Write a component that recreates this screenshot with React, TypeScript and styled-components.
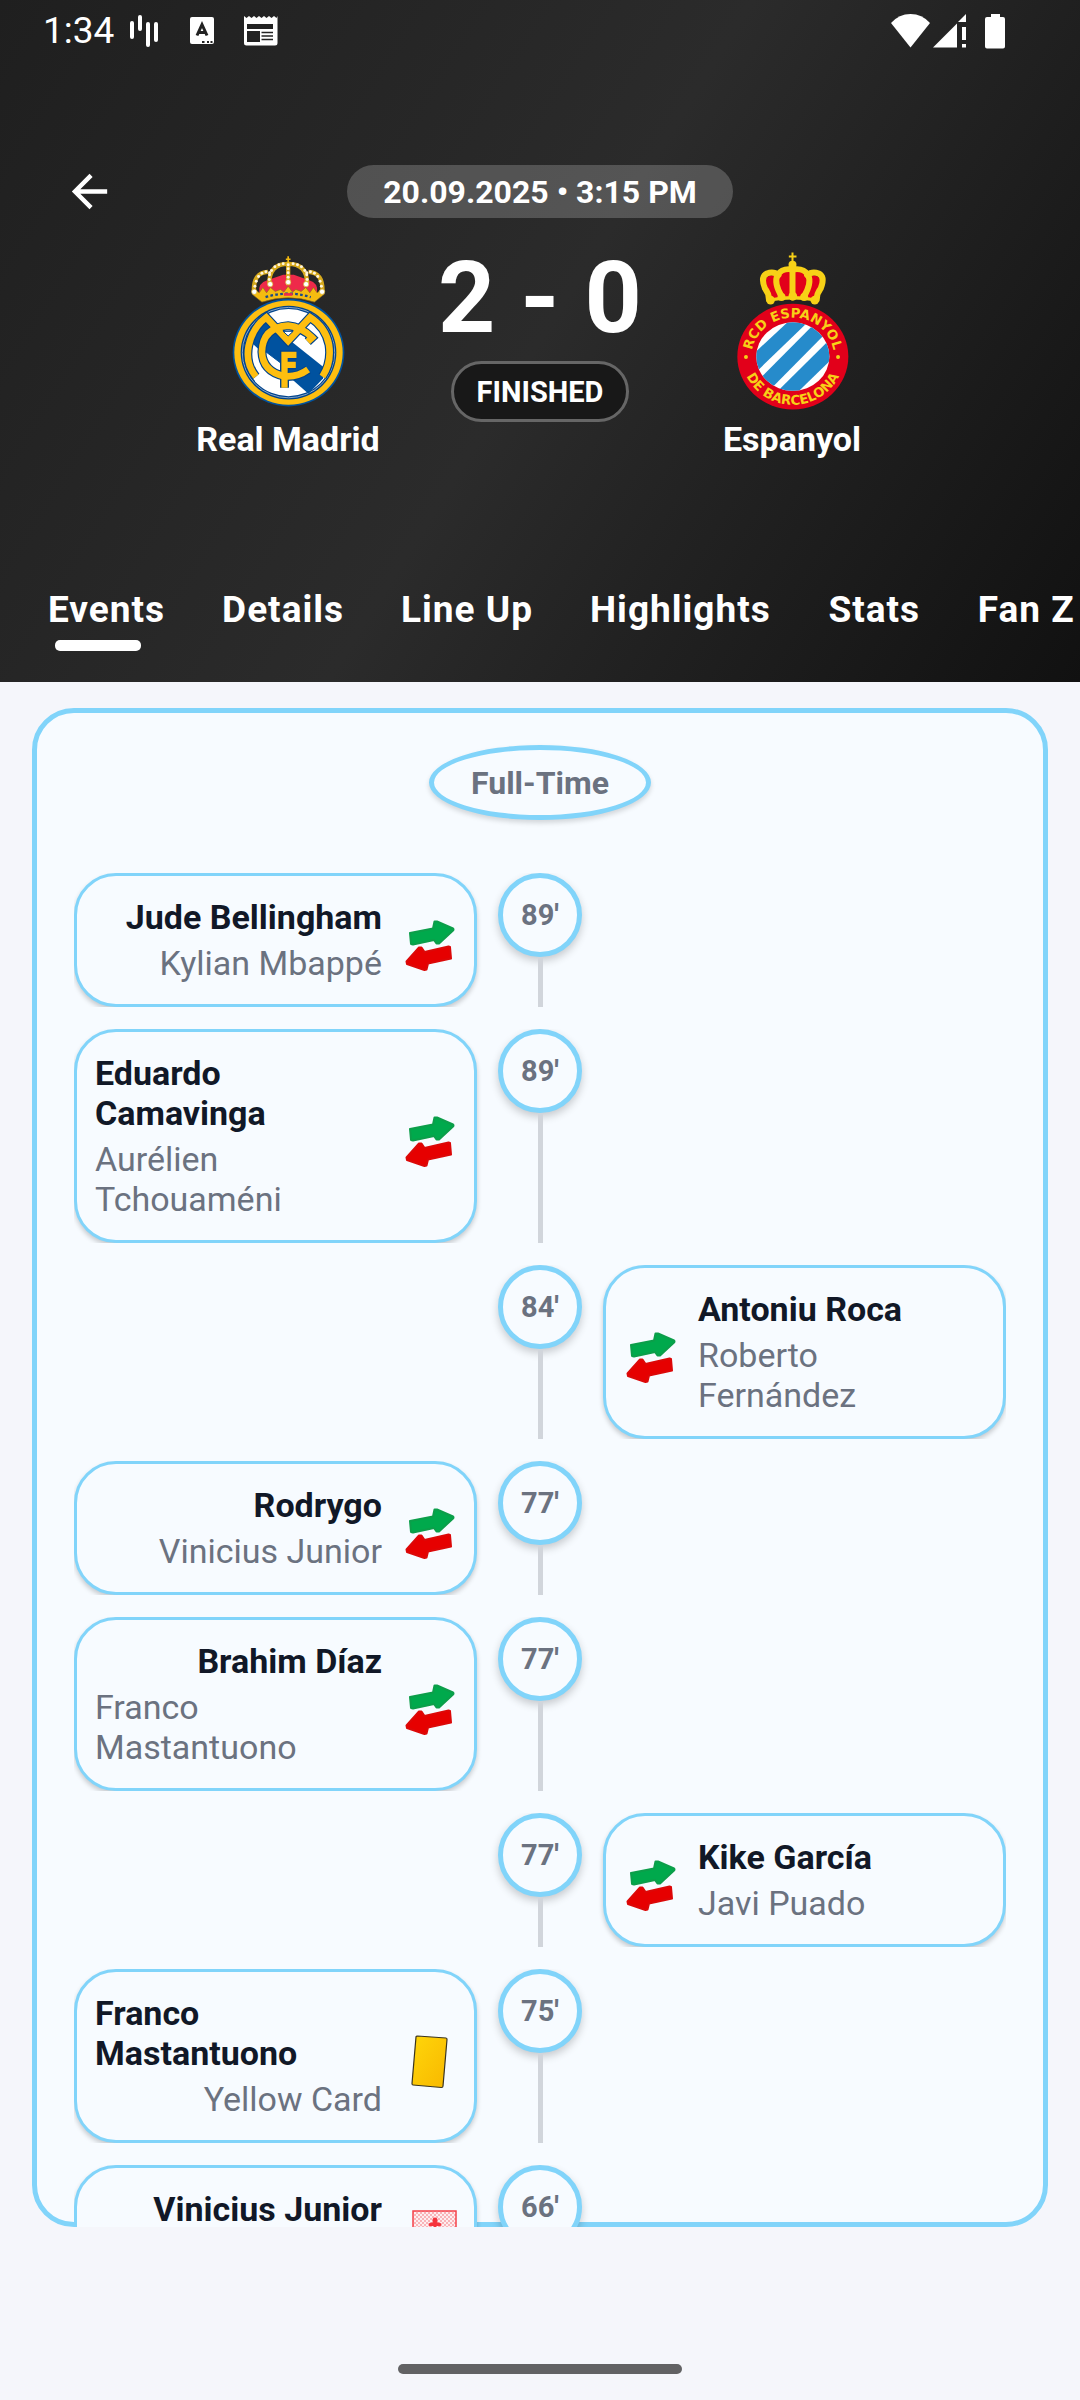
import { useState } from "react";
import styled, { createGlobalStyle } from "styled-components";

type Side = "home" | "away";
type EventKind = "sub" | "yellow" | "goal";

type MatchEvent = {
    minute: number;
    side: Side;
    kind: EventKind;
    player: string;
    detail?: string;
};

const TABS = ["Events", "Details", "Line Up", "Highlights", "Stats", "Fan Z"];

const EVENTS: MatchEvent[] = [
    { minute: 89, side: "home", kind: "sub", player: "Jude Bellingham", detail: "Kylian Mbappé" },
    { minute: 89, side: "home", kind: "sub", player: "Eduardo Camavinga", detail: "Aurélien Tchouaméni" },
    { minute: 84, side: "away", kind: "sub", player: "Antoniu Roca", detail: "Roberto Fernández" },
    { minute: 77, side: "home", kind: "sub", player: "Rodrygo", detail: "Vinicius Junior" },
    { minute: 77, side: "home", kind: "sub", player: "Brahim Díaz", detail: "Franco Mastantuono" },
    { minute: 77, side: "away", kind: "sub", player: "Kike García", detail: "Javi Puado" },
    { minute: 75, side: "home", kind: "yellow", player: "Franco Mastantuono", detail: "Yellow Card" },
    { minute: 66, side: "home", kind: "goal", player: "Vinicius Junior" },
];

const GlobalStyle = createGlobalStyle`
    * {
        box-sizing: border-box;
    }

    body {
        margin: 0;
        font-family: Roboto, "Noto Sans", sans-serif;
        background: #f5f6fb;
    }

    svg {
        display: block;
    }
`;

const Screen = styled.div`
    display: flex;
    flex-direction: column;
    height: 100vh;
    overflow: hidden;
`;

const Header = styled.header`
    color: white;
    background: linear-gradient(122deg, #1f1f1f 0%, #2b2b2b 50%, #111111 100%);
    padding-bottom: 31px;
`;

const StatusBar = styled.div`
    display: flex;
    justify-content: space-between;
    align-items: center;
    height: 62px;
    padding: 0 74px 0 43px;
`;

const StatusGroup = styled.div`
    display: flex;
    align-items: center;
`;

const Clock = styled.span`
    font-size: 37px;
    line-height: 44px;
    margin-right: 14px;
`;

const Nav = styled.div`
    display: grid;
    grid-template-columns: 1fr auto 1fr;
    align-items: center;
    padding: 0 63px;
    margin-top: 103px;
`;

const BackButton = styled.button`
    width: 53px;
    height: 53px;
    padding: 0;
    border: none;
    background: none;
    color: inherit;
    cursor: pointer;
`;

const DatePill = styled.div`
    grid-column: 2;
    padding: 9px 36px 7px;
    border-radius: 27px;
    background: rgba(255, 255, 255, 0.2);
    font-size: 32px;
    font-weight: 700;
    line-height: 37px;
`;

const Scoreboard = styled.div`
    display: grid;
    grid-template-columns: 1fr 200px 1fr;
    padding: 0 136px;
    margin-top: 34px;
`;

const Team = styled.div`
    display: flex;
    flex-direction: column;
    align-items: center;
    gap: 9px;
`;

const TeamName = styled.span`
    font-size: 34px;
    font-weight: 700;
    line-height: 40px;
`;

const Result = styled.div`
    display: flex;
    flex-direction: column;
    align-items: center;
    gap: 17px;
`;

const Score = styled.div`
    font-size: 100px;
    font-weight: 700;
    line-height: 92px;
    white-space: nowrap;
`;

const StatusPill = styled.div`
    padding: 11px 23px 9px;
    border: 3px solid #666666;
    border-radius: 31px;
    background: #181818;
    font-size: 29px;
    font-weight: 700;
    line-height: 35px;
`;

const Tabs = styled.nav`
    display: flex;
    gap: 57px;
    margin-top: 129px;
    padding-left: 48px;
    overflow: hidden;
`;

const Tab = styled.button`
    flex: none;
    display: flex;
    flex-direction: column;
    gap: 8px;
    padding: 0;
    border: none;
    background: none;
    color: inherit;
    font-family: inherit;
    font-size: 37px;
    font-weight: 700;
    line-height: 44px;
    letter-spacing: 1px;
    cursor: pointer;
`;

const Indicator = styled.span<{ $active: boolean }>`
    width: 86px;
    height: 11px;
    margin-left: 7px;
    border-radius: 5px;
    background: ${({ $active }) => ($active ? "white" : "transparent")};
`;

const Body = styled.main`
    flex: 1;
    min-height: 0;
    overflow: hidden;
    padding: 26px 32px 0;
`;

const Timeline = styled.section`
    height: 100%;
    padding: 32px 37px 0;
    border: 5px solid #81d4fa;
    border-radius: 42px;
    background: #f7fbff;
`;

const FullTime = styled.div`
    width: 222px;
    margin: 0 auto 53px;
    padding: 15px 0 13px;
    border: 5px solid #81d4fa;
    border-radius: 50%;
    background: #f7fbff;
    box-shadow: 0 3px 5px rgba(0, 0, 0, 0.15);
    color: #6b7280;
    font-size: 32px;
    font-weight: 700;
    line-height: 37px;
    text-align: center;
`;

const Row = styled.div`
    display: grid;
    grid-template-columns: 1fr 84px 1fr;
    column-gap: 21px;
    margin-bottom: 22px;
    overflow: hidden;
`;

const EventCard = styled.article<{ $side: Side }>`
    grid-column: ${({ $side }) => ($side === "home" ? 1 : 3)};
    grid-row: 1;
    display: flex;
    flex-direction: ${({ $side }) => ($side === "home" ? "row" : "row-reverse")};
    gap: 21px;
    min-height: 134px;
    padding: 21px 18px;
    border: 3px solid #81d4fa;
    border-radius: 42px;
    background: #f7fbff;
    box-shadow: 0 3px 5px rgba(0, 0, 0, 0.2);
`;

const EventText = styled.div<{ $side: Side }>`
    flex: 1;
    min-width: 0;
    display: flex;
    flex-direction: column;
    align-items: ${({ $side }) => ($side === "home" ? "flex-end" : "flex-start")};
    gap: 6px;
    padding-right: ${({ $side }) => ($side === "home" ? "0" : "8px")};
    font-size: 34px;
    line-height: 40px;
`;

const Player = styled.span`
    color: #111827;
    font-weight: 700;
`;

const Detail = styled.span`
    color: #6b7280;
`;

const IconBox = styled.div`
    flex: none;
    align-self: center;
    width: 53px;
    padding-top: 10px;

    svg {
        overflow: visible;
    }
`;

const MinuteColumn = styled.div`
    grid-column: 2;
    grid-row: 1;
    display: flex;
    flex-direction: column;
    align-items: center;
`;

const Minute = styled.div`
    display: flex;
    align-items: center;
    justify-content: center;
    width: 84px;
    height: 84px;
    border: 5px solid #81d4fa;
    border-radius: 50%;
    background: #f7fbff;
    box-shadow: 0 4px 8px rgba(0, 0, 0, 0.2);
    color: #6b7280;
    font-size: 29px;
    font-weight: 700;
`;

const Line = styled.div`
    flex: 1;
    width: 5px;
    background: #d1d5db;
`;

const BottomBar = styled.footer`
    display: flex;
    justify-content: center;
    align-items: flex-end;
    height: 173px;
    padding-bottom: 26px;
`;

const HomeIndicator = styled.div`
    width: 284px;
    height: 10px;
    border-radius: 5px;
    background: #626264;
`;

function StatusIcons() {
    return (
        <svg width="150" height="36" viewBox="0 0 150 36" fill="white">
            <rect x="2" y="8" width="4" height="18" rx="2" />
            <rect x="10" y="2" width="4" height="16" rx="2" />
            <rect x="18" y="9" width="4" height="25" rx="2" />
            <rect x="26" y="9" width="4" height="20" rx="2" />
            <rect x="62" y="4" width="24" height="27" rx="2" />
            <path d="M69 22.500L74 11.500L79 22.500M71 19.500H77" fill="none" stroke="#222" strokeWidth="3" />
            <path d="M74 28h2.500v2h-2.500zM79 28h2v2h-2zM82.500 28h2v2h-2z" fill="#222" />
            <path d="M116 3l2.500 2 2.500-2 2.500 2 2.500-2 2.500 2 2.500-2 2.500 2 2.500-2 2.500 2 2.500-2 2.500 2 2.500-2 2.500 2 1-2V30q0 2.500-2.500 2.500H118.500q-2.500 0-2.500-2.500z" />
            <path d="M119 11h26v5h-26zM119 18h13v11h-13z" fill="#222" />
            <path d="M133.500 19.500H145M133.500 23H145M133.500 26.500H145" stroke="#222" strokeWidth="1.500" />
        </svg>
    );
}

function SignalIcons() {
    return (
        <svg width="116" height="36" viewBox="0 0 116 36" fill="white">
            <path d="M1 10Q9 1 20.500 1T40 10L20.500 34.500z" />
            <path d="M43 34.500L67 10.500V34.500zM68 9L76 1V9z" />
            <rect x="72" y="14" width="4" height="13" />
            <rect x="72" y="31" width="4" height="3.500" />
            <path d="M101 1h9v3h3q2 0 2 2V33.500q0 2-2 2H97q-2 0-2-2V6q0-2 2-2h4z" />
        </svg>
    );
}

function MadridCrest() {
    const m = "M228 440Q196 402 206 348Q218 292 259 262L325 333L391 262Q438 292 448 345Q456 398 428 440";
    const c = "M385 419Q352 443 312 439Q248 424 246 366Q248 292 325 287Q364 290 397 323L384 335";
    const f = "M314 474V375H350M314 405H348";
    const pearls = [
        [223, 185], [225, 168], [229, 153], [236, 139], [246, 129], [258, 125], [269, 128],
        [427, 185], [425, 168], [421, 153], [414, 139], [404, 129], [392, 125], [381, 128],
        [268, 148], [269, 134], [275, 121], [285, 110], [297, 104], [310, 101],
        [382, 148], [381, 134], [375, 121], [365, 110], [353, 104], [340, 101],
        [325, 104], [325, 116], [325, 128], [325, 141],
    ];

    return (
        <svg width="113" height="158" viewBox="156 66 340 474">
            <path d="M238 187Q234 158 262 150L310 134H342L388 150Q416 158 412 187L404 200H246z" fill="#ee2a4a" />
            <path d="M222 186Q219 127 264 125M428 186Q431 127 386 125M268 160Q268 101 325 101M382 160Q382 101 325 101M325 95V165" fill="none" stroke="#d6a91c" strokeWidth="13" />
            <path d="M216 192L225 178L238 188L249 172L260 188L272 172L286 184L302 178L312 186L325 168L338 186L348 178L364 184L378 172L390 188L401 172L412 188L425 178L434 192L404 216Q325 190 246 216z" fill="#f5bb10" stroke="#8b6c22" strokeWidth="2" />
            <path d="M318 87H332M325 78V100" stroke="#f5bb10" strokeWidth="5" />
            <path d="M257 201Q325 180 393 201" fill="none" stroke="#18498b" strokeWidth="7" strokeDasharray="8 7" />
            <path d="M312 193H338" stroke="#ee2a4a" strokeWidth="8" />
            {pearls.map(([x, y]) => (
                <circle key={`${x}-${y}`} cx={x} cy={y} r="4.500" fill="#fff6df" />
            ))}
            {[[223, 185], [271, 162], [325, 156], [379, 162], [427, 185]].map(([x, y]) => (
                <circle key={x} cx={x} cy={y} r="8" fill="white" stroke="#d6a91c" strokeWidth="2" />
            ))}
            <ellipse cx="326" cy="368" rx="168" ry="162" fill="#00529f" />
            <ellipse cx="326" cy="368" rx="163" ry="157" fill="#febe10" />
            <ellipse cx="326" cy="368" rx="144" ry="141" fill="#00438b" />
            <ellipse cx="326" cy="368" rx="139" ry="136" fill="none" stroke="#ccd8e8" strokeWidth="2" />
            <ellipse cx="326" cy="368" rx="134" ry="131" fill="white" />
            <path d="M249 272L262 277L432 412L430 446L386 492L345 456L208 332Q221 294 249 272z" fill="#00529f" />
            <path d="M240 352L306 402V425Q262 419 248 380z" fill="white" stroke="#00529f" strokeWidth="3" />
            <g fill="none" stroke="#00438b" strokeWidth="27">
                <path d={m} />
                <path d={c} />
                <path d={f} />
            </g>
            <g fill="none" stroke="#febe10" strokeWidth="20">
                <path d={m} />
                <path d={c} />
                <path d={f} strokeWidth="19" />
            </g>
            <path d="M310 304H340L325 318z" fill="white" stroke="#00438b" strokeWidth="3" />
        </svg>
    );
}

function EspanyolCrest() {
    return (
        <svg width="113" height="158" viewBox="169 66 340 474">
            <defs>
                <clipPath id="inner">
                    <ellipse cx="340" cy="380" rx="110" ry="103" />
                </clipPath>
                <path id="top-arc" d="M216 380A124 117 0 0 1 464 380" />
                <path id="bottom-arc" d="M188 380A152 145 0 0 0 492 380" />
            </defs>
            <path d="M262 206L257 165Q252 140 275 136Q292 134 300 134Q318 118 340 118Q362 118 380 134Q390 134 405 136Q428 140 423 165L418 206z" fill="#e2001a" />
            <g fill="none" stroke="#f7d117" strokeWidth="18" strokeLinecap="round">
                <path d="M268 208Q268 190 256 175Q242 140 262 130Q282 122 297 135" />
                <path d="M412 208Q412 190 424 175Q438 140 418 130Q398 122 383 135" />
                <path d="M307 200Q282 160 294 134Q307 115 332 117" />
                <path d="M373 200Q398 160 386 134Q373 115 348 117" />
                <path d="M339 106V202" />
            </g>
            <path d="M272 205Q339 190 408 205V214Q339 202 272 214z" fill="#f7d117" />
            {[[273, 210, 13], [306, 201, 12], [340, 198, 13], [374, 201, 12], [406, 210, 13], [339, 104, 12]].map(([x, y, r]) => (
                <circle key={`${x}-${y}`} cx={x} cy={y} r={r} fill="#f7d117" />
            ))}
            <path d="M339 67V100M328 79H351" stroke="#f7d117" strokeWidth="6" />
            <ellipse cx="340" cy="380" rx="167" ry="159" fill="#e2001a" />
            <g clipPath="url(#inner)">
                <rect x="228" y="275" width="224" height="210" fill="white" />
                <path d="M202 390L342 260H402L202 453z" fill="#268bcb" />
                <path d="M230 457L424 262L470 279L262 489z" fill="#268bcb" />
                <path d="M273 505L470 310V375L332 509z" fill="#268bcb" />
            </g>
            <g fill="#f7d117" fontFamily="DejaVu Sans, sans-serif" fontSize="40" fontWeight="700" textAnchor="middle">
                <text>
                    <textPath href="#top-arc" startOffset="50%">RCD ESPANYOL</textPath>
                </text>
                <text>
                    <textPath href="#bottom-arc" startOffset="50%">DE BARCELONA</textPath>
                </text>
            </g>
            <circle cx="199" cy="381" r="6" fill="#f7d117" />
            <circle cx="476" cy="381" r="6" fill="#f7d117" />
        </svg>
    );
}

function EventIcon({ kind }: { kind: EventKind }) {
    if (kind === "yellow") {
        return (
            <svg width="53" height="53" viewBox="0 0 53 53">
                <defs>
                    <linearGradient id="card" x1="0" y1="0" x2="1" y2="1">
                        <stop offset="0" stopColor="#ffd60a" />
                        <stop offset="1" stopColor="#f8b800" />
                    </linearGradient>
                </defs>
                <path d="M14.500 1L43 3Q44 3 44 4.500L40 51Q40 52.500 38.500 52.500L10 50Q9 50 9 48.500L13 2Q13 1 14.500 1z" fill="url(#card)" stroke="#3a3420" strokeWidth="1.200" />
            </svg>
        );
    }

    if (kind === "goal") {
        return (
            <svg width="53" height="53" viewBox="0 0 53 53">
                <defs>
                    <pattern id="net" width="4" height="4" patternUnits="userSpaceOnUse">
                        <path d="M0 0L4 4M4 0L0 4" stroke="#f9b4b8" strokeWidth="1" />
                    </pattern>
                </defs>
                <rect x="10" y="0" width="43" height="48" fill="#fdeef0" />
                <rect x="10" y="0" width="43" height="48" fill="url(#net)" stroke="#f5424a" strokeWidth="1.500" />
                <circle cx="32" cy="9" r="2.500" fill="#f5333c" />
                <path d="M26 14L32 12L38 14M32 12V30" fill="none" stroke="#f5333c" strokeWidth="3" />
            </svg>
        );
    }

    return (
        <svg width="53" height="53" viewBox="0 0 53 53" strokeWidth="2" strokeLinejoin="round">
            <path d="M7 14L30 9.500L31.500 2.500L34 2.500L50 9.500Q51 10.500 50 11.500L36 24.500L33.500 24.500L31 21L10 25.500L8 25z" fill="#00a94c" stroke="#0c9e4a" />
            <path d="M3.500 42.500L16 28.500L18.500 28.500L21.500 33L45.500 27.500L47 28L48 39.500L25 44.500L23.500 50.500L21.500 51L4 45z" fill="#e60000" stroke="#dc0808" />
        </svg>
    );
}

function EventRow({ event }: { event: MatchEvent }) {
    return (
        <Row>
            <EventCard $side={event.side}>
                <EventText $side={event.side}>
                    <Player>{event.player}</Player>
                    {event.detail && <Detail>{event.detail}</Detail>}
                </EventText>
                <IconBox>
                    <EventIcon kind={event.kind} />
                </IconBox>
            </EventCard>
            <MinuteColumn>
                <Minute>{event.minute}'</Minute>
                <Line />
            </MinuteColumn>
        </Row>
    );
}

function App() {
    const [tab, setTab] = useState("Events");

    return (
        <Screen>
            <GlobalStyle />
            <Header>
                <StatusBar>
                    <StatusGroup>
                        <Clock>1:34</Clock>
                        <StatusIcons />
                    </StatusGroup>
                    <SignalIcons />
                </StatusBar>
                <Nav>
                    <BackButton aria-label="Back">
                        <svg width="53" height="53" viewBox="0 0 24 24" fill="white">
                            <path d="M20 11H7.830l5.590-5.590L12 4l-8 8 8 8 1.410-1.410L7.830 13H20v-2z" />
                        </svg>
                    </BackButton>
                    <DatePill>20.09.2025 • 3:15 PM</DatePill>
                </Nav>
                <Scoreboard>
                    <Team>
                        <MadridCrest />
                        <TeamName>Real Madrid</TeamName>
                    </Team>
                    <Result>
                        <Score>2 - 0</Score>
                        <StatusPill>FINISHED</StatusPill>
                    </Result>
                    <Team>
                        <EspanyolCrest />
                        <TeamName>Espanyol</TeamName>
                    </Team>
                </Scoreboard>
                <Tabs>
                    {TABS.map((name) => (
                        <Tab key={name} onClick={() => setTab(name)}>
                            {name}
                            <Indicator $active={tab === name} />
                        </Tab>
                    ))}
                </Tabs>
            </Header>
            <Body>
                <Timeline>
                    <FullTime>Full-Time</FullTime>
                    {EVENTS.map((event, index) => (
                        <EventRow key={index} event={event} />
                    ))}
                </Timeline>
            </Body>
            <BottomBar>
                <HomeIndicator />
            </BottomBar>
        </Screen>
    );
}

export default App;
